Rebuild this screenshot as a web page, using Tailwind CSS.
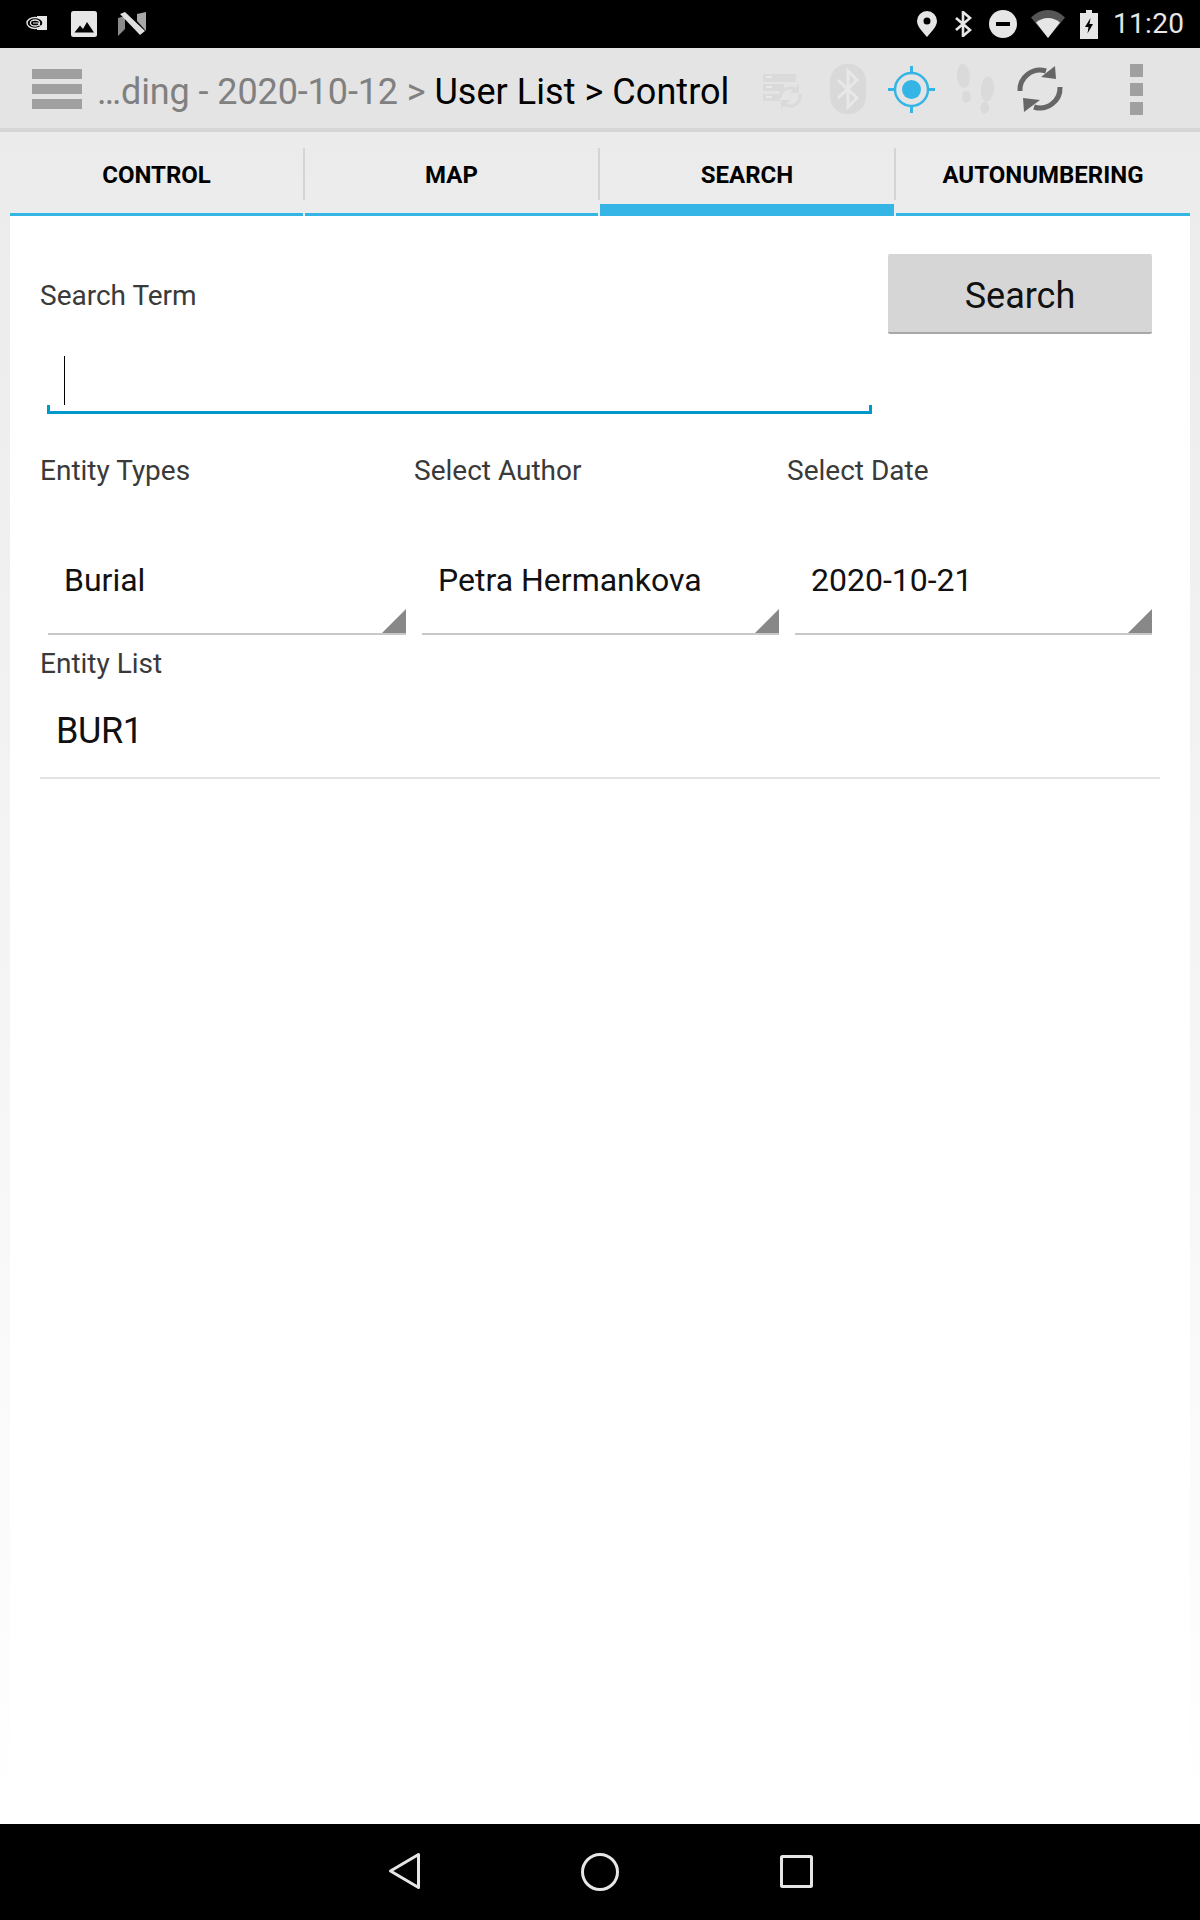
<!doctype html>
<html lang="en">
<head>
<meta charset="utf-8">
<title>User List - Control</title>
<script src="https://cdn.jsdelivr.net/npm/@tailwindcss/browser@4"></script>
</head>
<body class="font-['Roboto',sans-serif] bg-white">
<div class="w-[1200px] h-[1920px] flex flex-col overflow-hidden">

  <!-- status bar -->
  <div class="h-[48px] shrink-0 bg-black flex items-center text-[#e6e6e6]">
    <svg class="ml-[26px] mt-[-2px]" width="21" height="14" viewBox="0 0 21 14">
      <rect x="11" y="0" width="10" height="14" fill="#e6e6e6"/>
      <ellipse cx="9" cy="7" rx="8" ry="5.5" fill="#000" stroke="#e6e6e6" stroke-width="1.4"/>
      <ellipse cx="9" cy="7" rx="4.6" ry="3" fill="none" stroke="#e6e6e6" stroke-width="1.3"/>
      <path d="M7 7h5l3 4" fill="none" stroke="#e6e6e6" stroke-width="1.2"/>
    </svg>
    <svg class="ml-[24px]" width="26" height="26" viewBox="0 0 26 26">
      <rect width="26" height="26" rx="2.5" fill="#e6e6e6"/>
      <path d="M3.5 21.5l5.5-7 3 3.5 4-7 7 10.500z" fill="#000"/>
    </svg>
    <svg class="ml-[21px]" width="28" height="24" viewBox="0 0 28 24">
      <path d="M0 6l7-2v13l-7 7z" fill="#8a8a8a"/>
      <path d="M2 2l5-2 20 19-5 4z" fill="#e0e0e0"/>
      <path d="M19 9V2l9-2v19z" fill="#a8a8a8"/>
    </svg>
    <svg class="ml-[771px]" width="20" height="26" viewBox="0 0 20 26">
      <path fill-rule="evenodd" d="M10 0a10 10 0 0 1 10 10c0 6-7 12-10 16C7 22 0 16 0 10A10 10 0 0 1 10 0zm0 6.500a3.500 3.500 0 1 0 0 7 3.500 3.500 0 0 0 0-7z" fill="#e6e6e6"/>
    </svg>
    <svg class="ml-[18px]" width="17" height="26" viewBox="0 0 17 26">
      <path d="M1 7l14 12-7 6V1l7 6L1 19" fill="none" stroke="#e6e6e6" stroke-width="2.600"/>
    </svg>
    <svg class="ml-[17px]" width="28" height="28" viewBox="0 0 28 28">
      <circle cx="14" cy="14" r="14" fill="#e6e6e6"/>
      <rect x="7" y="12" width="14" height="4" fill="#000"/>
    </svg>
    <svg class="ml-[14px]" width="34" height="28" viewBox="0 0 34 28">
      <path d="M0 7.500C4.500 3 10.500 0 17 0s12.500 3 17 7.500L17 28z" fill="#555"/>
      <path d="M5 12.500C8.500 9.500 12.500 8 17 8s8.500 1.500 12 4.500L17 28z" fill="#e6e6e6"/>
    </svg>
    <svg class="ml-[15px]" width="18" height="29" viewBox="0 0 18 29">
      <path fill-rule="evenodd" d="M6 0h6v3h6v26H0V3h6zM10.500 8L5 17h3.500l-1 6.500L13 14H9.500z" fill="#e6e6e6"/>
    </svg>
    <span class="ml-[15px] text-[28px] leading-[48px] tracking-[0.3px]">11:20</span>
  </div>

  <!-- action bar -->
  <div class="h-[84px] shrink-0 bg-[#e4e4e4] border-b-4 border-[#d5d5d5] flex items-center">
    <div class="ml-[32px] mt-[2px] w-[50px] flex flex-col gap-[5px] shrink-0">
      <div class="h-[10px] bg-[#a0a0a0]"></div>
      <div class="h-[10px] bg-[#a0a0a0]"></div>
      <div class="h-[10px] bg-[#a0a0a0]"></div>
    </div>
    <div class="ml-[15px] w-[650px] shrink-0 pt-[8px] text-[36px] tracking-[-0.1px] leading-[80px] whitespace-nowrap text-[#808080]">…ding - 2020-10-12 &gt; <span class="text-black tracking-[0.05px]">User List &gt; Control</span></div>
    <!-- sync entities -->
    <svg class="ml-[16px] mt-[8px] shrink-0" width="40" height="36" viewBox="0 0 40 36" fill="none">
      <path d="M0 0h33v8H0zM0 10h21v7H0zM0 20h17v7H0z" fill="#dadada"/>
      <path d="M3 3h6M3 13h6M3 23h6" stroke="#e8e8e8" stroke-width="2"/>
      <path d="M17 24a10 10 0 0 1 17-7M37 20a10 10 0 0 1-17 9" stroke="#dadada" stroke-width="3"/>
      <path d="M36 10v9h-9zM18 35v-9h9z" fill="#dadada"/>
    </svg>
    <!-- bluetooth -->
    <svg class="ml-[27px] mt-[2px] shrink-0" width="36" height="50" viewBox="0 0 36 50" fill="none">
      <rect width="36" height="50" rx="17" fill="#d9d9d9"/>
      <path d="M8 16l19 18-9 9V7l9 9L8 34" stroke="#e8e8e8" stroke-width="3"/>
    </svg>
    <!-- gps -->
    <svg class="ml-[22px] mt-[2px] shrink-0" width="47" height="47" viewBox="0 0 47 47" fill="none">
      <circle cx="23.500" cy="23.500" r="16.500" stroke="#35b5e5" stroke-width="2.500"/>
      <circle cx="23.500" cy="23.500" r="9.500" fill="#35b5e5"/>
      <path d="M23.500 0v7M23.500 40v7M0 23.500h7M40 23.500h7" stroke="#35b5e5" stroke-width="3"/>
    </svg>
    <!-- steps -->
    <svg class="ml-[20px] mt-[2px] shrink-0" width="40" height="50" viewBox="0 0 40 50" fill="#dadada">
      <g transform="rotate(-5 9 19)">
        <ellipse cx="9" cy="12" rx="6.500" ry="12"/>
        <ellipse cx="10" cy="33" rx="4.500" ry="6"/>
      </g>
      <g transform="rotate(5 32 30)">
        <ellipse cx="32" cy="25" rx="6.500" ry="12.500"/>
        <ellipse cx="31" cy="44" rx="4.500" ry="6"/>
      </g>
    </svg>
    <!-- sync -->
    <svg class="ml-[21px] mt-[2px] shrink-0" width="48" height="50" viewBox="0 0 48 50" fill="none">
      <path d="M4 27A20 20 0 0 1 30 7M44 23A20 20 0 0 1 18 43" stroke="#666" stroke-width="5"/>
      <path d="M39 2l1 13-15-2zM8 48L7 34l17 2z" fill="#666"/>
    </svg>
    <!-- overflow -->
    <div class="ml-[66px] mt-[2px] w-[13px] flex flex-col gap-[6px] shrink-0">
      <div class="h-[13px] bg-[#a0a0a0]"></div>
      <div class="h-[13px] bg-[#a0a0a0]"></div>
      <div class="h-[13px] bg-[#a0a0a0]"></div>
    </div>
  </div>

  <div class="flex-1 flex flex-col bg-linear-to-b from-[#ebebeb] to-white px-[10px]">
    <!-- tabs -->
    <div class="h-[84px] shrink-0 flex items-stretch text-[24px] font-bold text-black">
      <div class="w-[293px] flex flex-col">
        <div class="flex-1 flex items-center justify-center pt-[5px]">CONTROL</div>
        <div class="h-[3px] bg-[#35b5e5]"></div>
      </div>
      <div class="self-start mt-[16px] w-[2px] h-[52px] bg-[#d4d4d4]"></div>
      <div class="w-[293px] flex flex-col">
        <div class="flex-1 flex items-center justify-center pt-[5px]">MAP</div>
        <div class="h-[3px] bg-[#35b5e5]"></div>
      </div>
      <div class="self-start mt-[16px] w-[2px] h-[52px] bg-[#d4d4d4]"></div>
      <div class="w-[294px] flex flex-col">
        <div class="h-[72px] flex items-center justify-center pt-[14px]">SEARCH</div>
        <div class="h-[12px] bg-[#35b5e5]"></div>
      </div>
      <div class="self-start mt-[16px] w-[2px] h-[52px] bg-[#d4d4d4]"></div>
      <div class="flex-1 flex flex-col">
        <div class="flex-1 flex items-center justify-center pt-[5px]">AUTONUMBERING</div>
        <div class="h-[3px] bg-[#35b5e5]"></div>
      </div>
    </div>

    <!-- panel -->
    <div class="flex-1 bg-white pl-[30px]">
      <div class="flex justify-between h-[198px]">
        <div class="w-[832px]">
          <div class="mt-[60px] h-[40px] text-[28px] leading-[40px] text-[#3a3a3a]">Search Term</div>
          <div class="ml-[7px] pt-[40px]">
            <div class="ml-[17px] w-px h-[49px] bg-black"></div>
            <div class="h-[9px] border-x-[3px] border-b-[3px] border-[#0099cc]"></div>
          </div>
        </div>
        <button class="mt-[38px] mr-[38px] w-[264px] h-[80px] bg-[#d6d6d6] rounded-[2px] border-b-2 border-[#a8a8a8] pt-[6px] text-[36px] text-[#111]">Search</button>
      </div>

      <div class="grid grid-cols-[374px_373px_365px] mt-[37px] text-[28px] leading-[40px] text-[#3a3a3a]">
        <div>Entity Types</div>
        <div>Select Author</div>
        <div>Select Date</div>
      </div>

      <div class="grid grid-cols-[374px_373px_365px] text-[32px] text-[#111]">
        <div class="ml-[8px] mr-[8px] h-[144px] border-b-2 border-[#c8c8c8] flex justify-between">
          <span class="ml-[16px] mt-[65px] leading-[48px]">Burial</span>
          <svg class="self-end" width="24" height="24" viewBox="0 0 24 24"><path d="M24 0v24H0z" fill="#888"/></svg>
        </div>
        <div class="ml-[8px] mr-[8px] h-[144px] border-b-2 border-[#c8c8c8] flex justify-between">
          <span class="ml-[16px] mt-[65px] leading-[48px]">Petra Hermankova</span>
          <svg class="self-end" width="24" height="24" viewBox="0 0 24 24"><path d="M24 0v24H0z" fill="#888"/></svg>
        </div>
        <div class="ml-[8px] h-[144px] border-b-2 border-[#c8c8c8] flex justify-between">
          <span class="ml-[16px] mt-[65px] leading-[48px]">2020-10-21</span>
          <svg class="self-end" width="24" height="24" viewBox="0 0 24 24"><path d="M24 0v24H0z" fill="#888"/></svg>
        </div>
      </div>

      <div class="mt-[9px] h-[40px] text-[28px] leading-[40px] text-[#3a3a3a]">Entity List</div>
      <div class="w-[1120px] h-[95px] border-b-2 border-[#e3e3e3] pl-[16px] pt-[23px] text-[36px] tracking-[-0.4px] leading-[48px] text-[#111]">BUR1</div>
    </div>
  </div>

  <!-- nav bar -->
  <div class="h-[96px] shrink-0 bg-black flex items-start">
    <svg class="ml-[388px] mt-[28px]" width="33" height="38" viewBox="0 0 33 38" fill="none">
      <path d="M30.500 2.500v33L2.500 19z" stroke="#e6e6e6" stroke-width="3" stroke-linejoin="round"/>
    </svg>
    <svg class="ml-[160px] mt-[29px]" width="38" height="38" viewBox="0 0 38 38" fill="none">
      <circle cx="19" cy="19" r="17.500" stroke="#e6e6e6" stroke-width="3"/>
    </svg>
    <svg class="ml-[161px] mt-[31px]" width="33" height="33" viewBox="0 0 33 33" fill="none">
      <rect x="1.500" y="1.500" width="30" height="30" rx="1" stroke="#e6e6e6" stroke-width="3"/>
    </svg>
  </div>
</div>
</body>
</html>
